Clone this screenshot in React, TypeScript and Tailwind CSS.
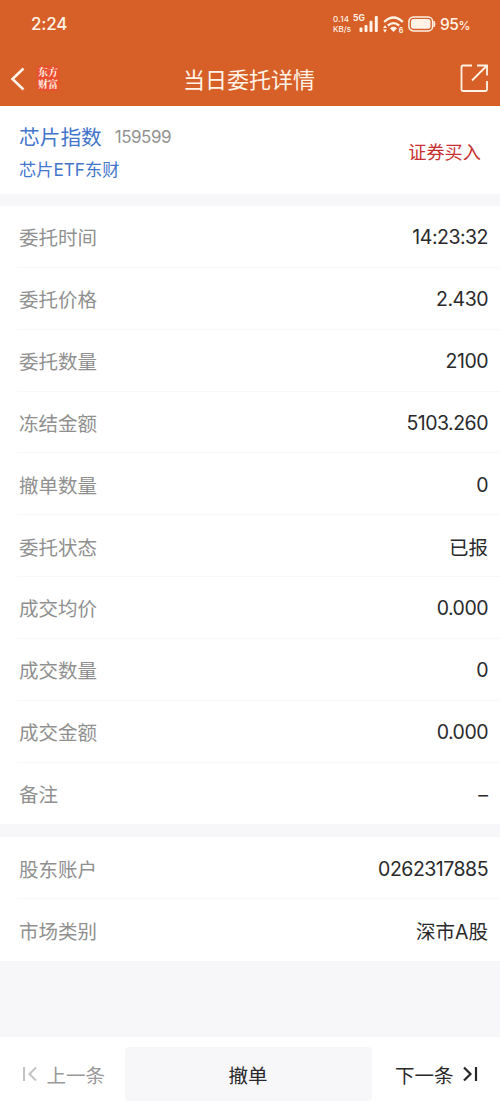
import clsx from "clsx";

interface DetailItem {
    label: string;
    value: string;
}

const orderItems: DetailItem[] = [
    { label: "委托时间", value: "14:23:32" },
    { label: "委托价格", value: "2.430" },
    { label: "委托数量", value: "2100" },
    { label: "冻结金额", value: "5103.260" },
    { label: "撤单数量", value: "0" },
    { label: "委托状态", value: "已报" },
    { label: "成交均价", value: "0.000" },
    { label: "成交数量", value: "0" },
    { label: "成交金额", value: "0.000" },
    { label: "备注", value: "–" },
];

const accountItems: DetailItem[] = [
    { label: "股东账户", value: "0262317885" },
    { label: "市场类别", value: "深市A股" },
];

function StatusBar() {
    return (
        <div className="flex h-12 items-center pl-[31px] pr-[30px]">
            <span className="pt-[2px] text-[17px] font-medium tracking-[-0.2px]">2:24</span>
            <div className="ml-auto flex items-center">
                <div className="flex h-5 w-[19px] flex-col justify-center text-[8px] font-medium leading-[10px] whitespace-nowrap">
                    <span className="tracking-[0.3px]">0.14</span>
                    <span>KB/s</span>
                </div>
                {/* 5G 信号 */}
                <svg className="ml-[1px]" width="27" height="20" viewBox="0 0 27 20" fill="currentColor">
                    <text x="0" y="6.5" fontSize="8.5" fontWeight="700">5G</text>
                    <rect x="6.500" y="13.500" width="3" height="4.500" rx="1" />
                    <rect x="11.500" y="11" width="3" height="7" rx="1" />
                    <rect x="16.500" y="6.800" width="3" height="11.200" rx="1" />
                    <rect x="21.800" y="2" width="3" height="16" rx="1" />
                </svg>
                {/* Wi-Fi 6 */}
                <svg className="ml-[3px]" width="22" height="20" viewBox="0 0 22 20" fill="none" stroke="currentColor">
                    <path d="M1.200 8Q10.500-1 19.800 8" strokeWidth="2.300" />
                    <path d="M4.800 11.700Q10.500 6.500 16.200 11.700" strokeWidth="2.300" />
                    <path d="M7 14.200Q10.500 11.500 14 14.200L10.500 18Z" fill="currentColor" stroke="none" />
                    <path d="M2 11.200 4 14H0ZM2 18.800 4 15.500H0Z" fill="currentColor" stroke="none" />
                    <text x="15.800" y="18.500" fontSize="7" fontWeight="700" fill="currentColor" stroke="none">6</text>
                </svg>
                <svg className="ml-[3px]" width="28" height="16" viewBox="0 0 28 16" fill="none">
                    <rect x="0.900" y="0.900" width="23.700" height="14" rx="4.500" stroke="currentColor" strokeWidth="1.500" />
                    <rect x="3" y="3" width="19.500" height="9.800" rx="2.500" fill="currentColor" />
                    <path d="M26 5q2 3 0 6Z" fill="currentColor" stroke="currentColor" />
                </svg>
                <span className="ml-[4px] pt-[1px] text-[15.500px] font-medium tracking-[-0.4px]">
                    95<span className="text-[12px]">%</span>
                </span>
            </div>
        </div>
    );
}

function TitleBar() {
    return (
        <div className="flex h-[58px] items-center justify-between pl-[10px] pr-[12px]">
            <div className="flex w-[50px] items-center pt-[3px]">
                <svg width="15" height="24" viewBox="0 0 15 24" fill="none" stroke="currentColor" strokeWidth="2.600">
                    <path d="M13.500 1.500 2.500 12l11 10.500" />
                </svg>
                <div className="ml-[12px] h-[25px] w-[22px] shrink-0 rounded-[3px] bg-[#ea5030] text-center font-[Noto_Serif_CJK_SC,Noto_Sans_CJK_SC,serif] text-[10px] font-bold leading-[12px]">
                    东方
                    <br />
                    财富
                </div>
            </div>
            <h1 className="pt-[5px] text-[22px] leading-none">当日委托详情</h1>
            <div className="flex w-[50px] justify-end pt-[2px]">
                <svg width="28" height="28" viewBox="0 0 28 28" fill="none" stroke="currentColor" strokeWidth="1.800">
                    <path d="M12 1.500H3Q1.500 1.500 1.500 3v22.500Q1.500 27 3 27h22.500Q27 27 27 25.500V17" />
                    <path d="M17 1.500h10V11.500M27 1.500 12 16.500" />
                </svg>
            </div>
        </div>
    );
}

function DetailList({ items }: { items: DetailItem[] }) {
    return (
        <div className="bg-white">
            {items.map((item, index) => (
                <div key={item.label} className="pl-[17px]">
                    <div
                        className={clsx(
                            "flex h-[61.85px] items-center justify-between pt-[5px] pl-[2px] pr-[12px]",
                            index < items.length - 1 && "border-b border-[#f8f8f9]"
                        )}
                    >
                        <span className="text-[19.500px] text-[#909090]">{item.label}</span>
                        <span
                            className={clsx(
                                "text-[19.500px] text-[#29292b]",
                                /^[\d.:]+$/.test(item.value) && "-mt-[2px] tracking-[-0.500px]",
                                item.value.includes(":") && "tracking-[-0.050px]"
                            )}
                        >
                            {item.value}
                        </span>
                    </div>
                </div>
            ))}
        </div>
    );
}

export default function App() {
    return (
        <div className="flex h-[1111px] w-[500px] flex-col overflow-hidden bg-[#f7f7f9] font-[Inter,Noto_Sans_CJK_SC,sans-serif]">
            <header className="h-[106px] shrink-0 bg-[#d75f28] text-[#fff3e7]">
                <StatusBar />
                <TitleBar />
            </header>

            {/* 证券信息 */}
            <section className="flex h-[88px] shrink-0 items-center justify-between bg-white pt-[5px] pl-[19px] pr-[19px]">
                <div className="flex flex-col">
                    <div className="flex h-[34px] items-center">
                        <span className="text-[20.700px] text-[#4376cb]">芯片指数</span>
                        <span className="ml-[13px] text-[17px] tracking-[-0.500px] text-[#929292]">159599</span>
                    </div>
                    <span className="flex h-[30px] items-center text-[17.200px] text-[#4376cb]">芯片ETF东财</span>
                </div>
                <span className="text-[18.200px] text-[#c7302f]">证券买入</span>
            </section>

            <div className="mt-3 shrink-0">
                <DetailList items={orderItems} />
            </div>
            <div className="mt-[13px] shrink-0">
                <DetailList items={accountItems} />
            </div>

            <footer className="mt-auto flex h-[74px] shrink-0 items-center justify-between bg-white pl-[22px] pr-[22px] text-[19.500px] text-[#29292b]">
                <button className="flex w-[83px] items-center justify-between text-[#999]">
                    <svg width="16" height="16" viewBox="0 0 16 16" fill="none" stroke="#c3c3c3" strokeWidth="2">
                        <path d="M2 1v14M14 1.500 7.500 8l6.500 6.500" />
                    </svg>
                    <span className="pt-[5px] whitespace-nowrap">上一条</span>
                </button>
                <button className="mr-[4px] h-[54px] w-[247px] rounded-[4px] bg-[#f7f7f9] pt-[5px]">撤单</button>
                <button className="flex w-[83px] items-center justify-between">
                    <span className="pt-[5px] whitespace-nowrap">下一条</span>
                    <svg width="16" height="16" viewBox="0 0 16 16" fill="none" stroke="currentColor" strokeWidth="2.200">
                        <path d="M2 1.500 8.500 8 2 14.500M14 1v14" />
                    </svg>
                </button>
            </footer>
        </div>
    );
}
